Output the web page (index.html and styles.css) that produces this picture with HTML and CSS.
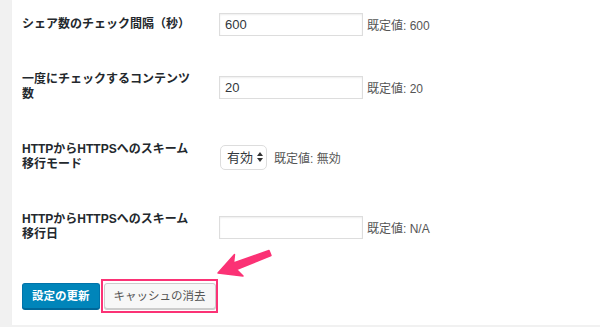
FILE: index.html
```html
<!DOCTYPE html>
<html lang="ja">
<head>
    <meta charset="UTF-8">
    <meta name="viewport" content="width=device-width, initial-scale=1.0">
    <title>設定</title>
    <link rel="stylesheet" href="styles.css">
</head>
<body>
    <div class="panel">
        <form class="settings">
            <div class="row">
                <label class="label" for="interval">シェア数のチェック間隔（秒）</label>
                <div class="field">
                    <input type="text" id="interval" value="600">
                    <span class="desc">既定値: 600</span>
                </div>
            </div>
            <div class="row">
                <label class="label" for="count">一度にチェックするコンテンツ数</label>
                <div class="field">
                    <input type="text" id="count" value="20">
                    <span class="desc">既定値: 20</span>
                </div>
            </div>
            <div class="row">
                <label class="label" for="mode">HTTPからHTTPSへのスキーム移行モード</label>
                <div class="field">
                    <div class="select">
                        <select id="mode">
                            <option>有効</option>
                            <option>無効</option>
                        </select>
                        <svg width="6" height="10" viewBox="0 0 6 10"><path d="M3 0 L6 4 H0 Z M0 6 H6 L3 10 Z" fill="#333"/></svg>
                    </div>
                    <span class="desc">既定値: 無効</span>
                </div>
            </div>
            <div class="row">
                <label class="label" for="date">HTTPからHTTPSへのスキーム移行日</label>
                <div class="field">
                    <input type="text" id="date" value="">
                    <span class="desc">既定値: N/A</span>
                </div>
            </div>
            <div class="actions">
                <button type="button" class="btn primary">設定の更新</button>
                <span class="mark">
                    <button type="button" class="btn secondary">キャッシュの消去</button>
                </span>
            </div>
        </form>
        <!-- annotation arrow -->
        <svg class="arrow" width="70" height="40" viewBox="0 0 70 40">
            <polygon points="8,28 24.5,9.5 23.5,18 59,5.5 61,10.5 26.5,24.5 33,31" fill="#fb3275" stroke="#fb3275" stroke-width="1.5" stroke-linejoin="round"/>
        </svg>
    </div>
</body>
</html>
```

FILE: styles.css
```css
body {
    margin: 0;
    background-color: #f1f1f1;
    font-family: "Liberation Sans", "Noto Sans CJK JP", sans-serif;
    color: #23282d;
}
.panel {
    position: relative;
    margin-left: 12px;
    padding: 0 0 12px 10px;
    background: #fff;
    box-shadow: 0 1px 1px rgba(0,0,0,0.04);
}
.settings {
    display: flex;
    flex-direction: column;
    gap: 6px;
}
.row {
    display: flex;
    align-items: center;
}
.label {
    width: 172px;
    padding: 17px 25px 17px 0;
    font-size: 12px;
    font-weight: bold;
    line-height: 15px;
}
.field {
    display: flex;
    align-items: center;
    gap: 4px;
}
.field input {
    box-sizing: border-box;
    width: 144px;
    height: 23px;
    margin: 0;
    padding: 0 5px;
    border: 1px solid #ddd;
    box-shadow: inset 0 1px 2px rgba(0,0,0,0.07);
    font-family: inherit;
    font-size: 13px;
    color: #32373c;
}
.select {
    box-sizing: border-box;
    display: flex;
    align-items: center;
    height: 25px;
    margin: 0 3px 0 1px;
    padding: 0 3px 0 6px;
    border: 1px solid #ddd;
    border-radius: 5px;
    background: #fff;
}
.select select {
    appearance: none;
    -webkit-appearance: none;
    border: 0;
    padding: 0;
    margin: 0 3px 0 0;
    background: transparent;
    font-family: inherit;
    font-size: 13px;
    color: #32373c;
}
.select svg {
    flex-shrink: 0;
}
.desc {
    font-size: 12px;
    color: #555;
}
.actions {
    display: flex;
    align-items: center;
    gap: 1px;
    margin-top: 14px;
}
.btn {
    height: 26px;
    padding: 0 9px;
    border-radius: 3px;
    font-family: inherit;
    font-size: 11.5px;
    line-height: 24px;
}
.primary {
    background: #0085ba;
    border: 1px solid #0073aa;
    border-bottom-color: #006799;
    box-shadow: 0 1px 0 #006799;
    color: #fff;
    font-weight: bold;
}
.secondary {
    display: block;
    background: #f7f7f7;
    border: 1px solid #ccc;
    box-shadow: 0 1px 0 #ccc;
    color: #555;
}
.mark {
    padding: 2px 0 2px 1px;
    border: 2px solid #fb3275;
}
.arrow {
    position: absolute;
    left: 198px;
    top: 245px;
}
```
